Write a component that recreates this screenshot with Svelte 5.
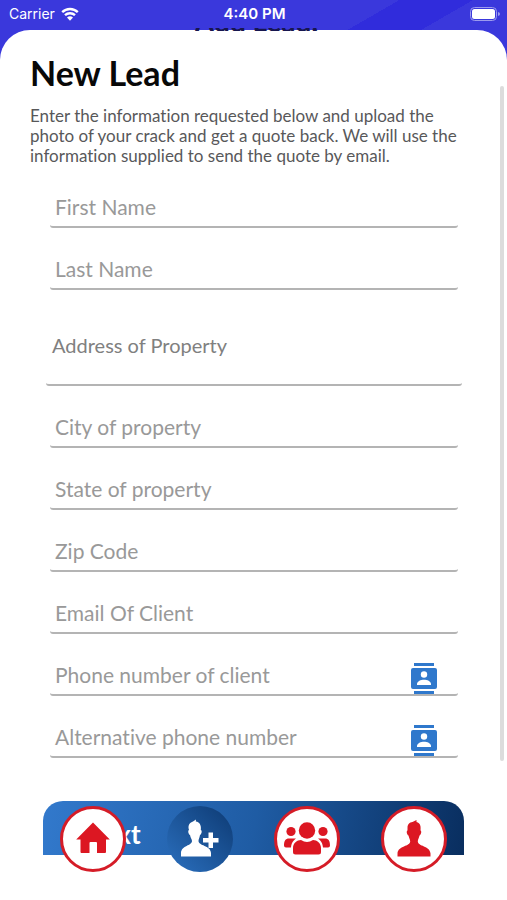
<script lang="ts">
  interface Field {
    id: string;
    label: string;
    type: string;
    kind?: 'wide' | 'contact';
  }

  const fields: Field[] = [
    { id: 'first-name', label: 'First Name', type: 'text' },
    { id: 'last-name', label: 'Last Name', type: 'text' },
    { id: 'address', label: 'Address of Property', type: 'text', kind: 'wide' },
    { id: 'city', label: 'City of property', type: 'text' },
    { id: 'state', label: 'State of property', type: 'text' },
    { id: 'zip', label: 'Zip Code', type: 'text' },
    { id: 'email', label: 'Email Of Client', type: 'email' },
    { id: 'phone', label: 'Phone number of client', type: 'tel', kind: 'contact' },
    { id: 'alt-phone', label: 'Alternative phone number', type: 'tel', kind: 'contact' },
  ];

  const tabs = ['Home', 'Add lead', 'Team', 'Profile'];

  let active = $state('Add lead');
  let values = $state<Record<string, string>>({});
</script>

<div class="screen">
  <header class="top">
    <div class="status">
      <span class="carrier">
        Carrier
        <svg class="wifi" viewBox="0 0 18 14" aria-hidden="true">
          <path d="M1.2 5.2a11.2 11.2 0 0 1 15.6 0M4 8.2a7.2 7.2 0 0 1 10 0" />
          <path class="dot" d="M9 13.8 6 10.6a4.3 4.3 0 0 1 6 0z" />
        </svg>
      </span>
      <span class="clock">4:40 PM</span>
      <svg class="battery" viewBox="0 0 30 14" aria-hidden="true">
        <rect class="shell" x="0.5" y="0.5" width="26" height="13" rx="4" />
        <rect x="2" y="2" width="23" height="10" rx="2.5" />
        <path class="tip" d="M28 5v4q2-.6 2-2t-2-2z" />
      </svg>
    </div>
    <div class="page-name">Add Lead.</div>
  </header>

  <main class="sheet">
    <h1>New Lead</h1>
    <p class="intro">
      Enter the information requested below and upload the photo of your crack and get a quote back. We will use the
      information supplied to send the quote by email.
    </p>

    <form id="lead-form" onsubmit={(e) => e.preventDefault()}>
      {#each fields as field (field.id)}
        <div class="field {field.kind ?? ''}">
          <label for={field.id} class:filled={values[field.id]}>{field.label}</label>
          <input id={field.id} type={field.type} bind:value={values[field.id]} />
          {#if field.kind === 'contact'}
            <button type="button" class="contacts" aria-label="Choose from contacts">
              <svg viewBox="0 0 26 31" aria-hidden="true">
                <path d="M3 0h20v3H3zM3 28h20v3H3zM2 5h22q2 0 2 2v17q0 2-2 2H2q-2 0-2-2V7q0-2 2-2z" />
                <circle class="cut" cx="13" cy="11.5" r="3.2" />
                <path class="cut" d="M6 22v-1c0-2.8 4-4.3 7-4.3s7 1.5 7 4.3v1z" />
              </svg>
            </button>
          {/if}
        </div>
      {/each}
    </form>
    <div class="scrollbar"></div>
  </main>

  <footer class="bottom">
    <button type="submit" form="lead-form" class="next">Next</button>
    <nav aria-label="Main">
      {#each tabs as tab (tab)}
        <button type="button" class="tab" class:active={active === tab} aria-label={tab} onclick={() => (active = tab)}>
          <svg viewBox="0 0 66 66" aria-hidden="true">
            {#if tab === 'Home'}
              <path d="M33 16.5 49.8 33.5H46V46q0 1-1 1H37V37q0-1-1-1H30.5q-1 0-1 1V47H21.5q-1 0-1-1V33.5H16.2z" />
            {:else if tab === 'Add lead'}
              <path
                d="M21.5 22C21.5 18 23 16.5 26 15.5L29 13.5 28.800 15.500C33 16 34.500 20 33.800 24 35.500 24.500 34.500 28.500 33 29 32.500 32 31.500 33 31.500 35 31.500 40 43.500 39 44 47V50.500H14V47C14.500 39 25 40 25 35 25 33 23.500 32 23 29 21.500 28.500 20.500 24.500 22 24Z"
              />
              <path d="M41.5 26.5h4.500V32H51.500v4.500H46V42h-4.500v-5.500H36V32h5.500z" />
            {:else if tab === 'Team'}
              <circle cx="33" cy="24.5" r="8.2" />
              <circle cx="17" cy="25.5" r="4.6" />
              <circle cx="49" cy="25.5" r="4.6" />
              <path d="M19 46v-4c0-5 4-8 8-8 4 2.5 8 2.5 12 0 4 0 8 3 8 8v4q0 2.5-2.5 2.5h-23Q19 48.5 19 46z" />
              <path d="M10 39.5c0-4.5 1.5-7 5-7h7c-3.5 2.5-4.5 5-5 9h-5q-2 0-2-2zM56 39.5c0-4.5-1.5-7-5-7h-7c3.5 2.5 4.5 5 5 9h5q2 0 2-2z" />
            {:else}
              <path
                d="M26.500 22C26.500 18 28.500 16.500 31.500 16L35.500 14 35.500 16C39.500 17 40 20.500 39.500 24.500 41 25 40 29 38.500 29.500 38 32.500 36.800 33 36.800 35.500 36.800 40.500 49 39.500 49.500 47.500V50.500H16.500V47.500C17 39.500 29.200 40.500 29.200 35.500 29.200 33 28 32.500 27.500 29.500 26 29 25 25 26.500 24.500Z"
              />
            {/if}
          </svg>
        </button>
      {/each}
    </nav>
  </footer>
</div>

<style>
  :global(body) {
    margin: 0;
    background: #fff;
  }

  .screen {
    display: flex;
    flex-direction: column;
    min-height: 100vh;
    font-family: Lato, "Liberation Sans", sans-serif;
    font-variant-ligatures: none;
    background: #fff;
  }

  .top {
    position: relative;
    height: 30px;
    padding-bottom: 32px;
    margin-bottom: -32px;
    color: #fff;
    background: linear-gradient(150deg, #3a38dc 0 65%, #302cdc 65% 77%, #3a38dc 77%);
  }

  .status {
    display: grid;
    grid-template-columns: 1fr auto 1fr;
    align-items: center;
    height: 28px;
    padding: 0 7px 0 9px;
    font: 15px/28px Inter, sans-serif;
  }

  .carrier {
    display: flex;
    align-items: center;
    gap: 6px;
    font-size: 14px;
  }

  .clock {
    font-weight: 600;
  }

  .wifi {
    width: 18px;
    height: 14px;
    fill: none;
    stroke: #fff;
    stroke-width: 2.4;
  }

  .dot {
    fill: #fff;
    stroke: none;
  }

  .battery {
    justify-self: end;
    width: 30px;
    height: 14px;
    fill: #fff;
  }

  .shell {
    fill: none;
    stroke: #9c9bee;
  }

  .tip {
    fill: #9c9bee;
  }

  /* scrolled away: only the foot of the title shows under the status bar */
  .page-name {
    position: absolute;
    inset: 4px 0 auto;
    z-index: 1;
    padding-left: 6px;
    font-size: 28px;
    font-weight: 700;
    line-height: 34px;
    text-align: center;
    color: #17164f;
    clip-path: inset(24px 0 7px);
  }

  .sheet {
    position: relative;
    padding: 25px 30px 0;
    border-radius: 30px 30px 0 0;
    background: #fff;
  }

  h1 {
    margin: 0;
    font-size: 34px;
    font-weight: 700;
    line-height: 36px;
    color: #080808;
  }

  .intro {
    margin: 15px 0 0;
    font-size: 17px;
    line-height: 20px;
    color: #58585a;
  }

  form {
    margin: 22px 15px 0 16px;
  }

  .field {
    display: grid;
    grid-template-columns: 1fr auto;
    height: 40px;
    margin: 0 4px 22px;
    border-bottom: 2px solid #b4b4b4;
    border-radius: 0 0 3px 3px;
    box-sizing: border-box;
  }

  .field label,
  .field input {
    grid-area: 1 / 1;
    min-width: 0;
    padding: 0 5px;
    font: 21px/38px Lato, sans-serif;
    font-variant-ligatures: none;
  }

  .field label {
    color: #999;
  }

  .field input {
    border: 0;
    outline: 0;
    color: #333;
    background: transparent;
  }

  .filled {
    visibility: hidden;
  }

  .wide {
    height: 74px;
    margin: 0 0 22px;
  }

  .wide label,
  .wide input {
    padding: 0 6px;
    font-size: 20px;
    line-height: 66px;
  }

  .wide label {
    color: #808080;
  }

  .contacts {
    grid-area: 1 / 2;
    align-self: end;
    width: 26px;
    height: 31px;
    margin-right: 21px;
    padding: 0;
    border: 0;
    background: none;
  }

  .contacts svg {
    display: block;
    fill: #2f78cc;
  }

  .contacts .cut {
    fill: #fff;
  }

  .scrollbar {
    position: absolute;
    top: 56px;
    right: 3px;
    bottom: 19px;
    width: 4px;
    border-radius: 2px;
    background: #dcdcdc;
  }

  .bottom {
    position: relative;
    padding: 21px 43px 45px;
  }

  .next {
    display: block;
    width: 100%;
    height: 54px;
    padding: 12px 41px 0;
    border: 0;
    border-radius: 20px 20px 0 0;
    font: 700 26px/32px Lato, sans-serif;
    text-align: left;
    color: #fff;
    background: linear-gradient(100deg, #3279cc, #1f5ca4 50%, #092e5f);
  }

  nav {
    position: absolute;
    inset: 26px 60px auto;
    display: flex;
    justify-content: space-between;
  }

  .tab {
    width: 66px;
    height: 66px;
    padding: 0;
    border: 3px solid #d51c27;
    border-radius: 50%;
    background: #fff;
  }

  .tab svg {
    display: block;
    margin: -3px;
    width: 66px;
    height: 66px;
    fill: #dc1722;
  }

  .tab.active {
    border-color: transparent;
    background: linear-gradient(45deg, #2b70bf, #0d3a73) border-box;
  }

  .tab.active svg {
    fill: #fff;
  }
</style>
